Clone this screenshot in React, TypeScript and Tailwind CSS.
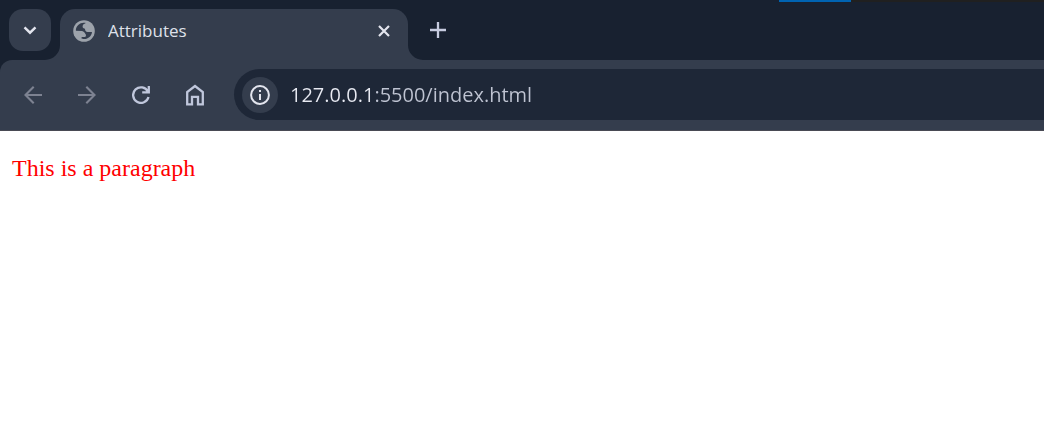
import { useState } from "react";
import type { ReactNode } from "react";

function IconButton({ label, className, children }: { label: string; className: string; children: ReactNode }) {
  return (
    <button type="button" aria-label={label} className={`flex shrink-0 items-center justify-center ${className}`}>
      {children}
    </button>
  );
}

function Globe() {
  return (
    <svg viewBox="0 0 24 24" className="size-6 shrink-0" aria-hidden="true">
      <circle cx="12" cy="12" r="10.8" fill="#9da3ab" />
      <path
        fill="#343d4d"
        d="M3.9 10.2 C4.6 6.8 7.6 4 11.6 3.8 C13 3.8 13.6 3.9 13.8 4.1 C12 4.9 10.6 5.8 10.6 7.5 C10.6 8.8 11.6 9.7 13 9.7 C13 11.7 13.8 12.9 15.6 12.9 L20 12.9 C19.6 16.8 16.4 19.9 12.2 20 C10.8 20 9.8 19.9 9.6 19.6 L9.6 18 L12.8 18 C14 18 14.2 16.6 13.8 15.6 C13 14 11.8 12.4 10 12 L3.9 11.8 Z"
      />
    </svg>
  );
}

function TabStrip() {
  return (
    <div className="relative flex h-[60px] items-end bg-[#182130] pl-[9px]">
      <div className="absolute top-0 right-0 flex h-0.5 w-[265px]">
        <div className="w-[72px] bg-[#0063b1]" />
        <div className="flex-1 bg-[#202020]" />
      </div>
      <IconButton label="Search tabs" className="mb-[9px] size-[42px] rounded-[14px] bg-[#343d4d] text-[#e3e5ee]">
        <svg viewBox="0 0 16 16" className="size-4" fill="none" stroke="currentColor" strokeWidth="2.4" aria-hidden="true">
          <path d="M2.5 5.3 8 10.7l5.5-5.4" />
        </svg>
      </IconButton>
      <div className="relative ml-[9px] flex h-[51px] w-[348px] items-center rounded-t-[15px] bg-[#343d4d] pr-3 pb-2 pl-3">
        <svg viewBox="0 0 15 15" className="absolute bottom-0 -left-[15px] size-[15px]" fill="#343d4d" aria-hidden="true">
          <path d="M15 0v15H0A15 15 0 0 0 15 0Z" />
        </svg>
        <svg viewBox="0 0 15 15" className="absolute -right-[15px] bottom-0 size-[15px]" fill="#343d4d" aria-hidden="true">
          <path d="M0 0v15h15A15 15 0 0 1 0 0Z" />
        </svg>
        <Globe />
        <span className="ml-3 flex-1 truncate text-[17px] leading-6 text-[#dfe1ea]">Attributes</span>
        <IconButton label="Close tab" className="size-6 text-[#e3e5ee]">
          <svg viewBox="0 0 12 12" className="size-3" fill="none" stroke="currentColor" strokeWidth="2.2" aria-hidden="true">
            <path d="m1 1 10 10M11 1 1 11" />
          </svg>
        </IconButton>
      </div>
      <IconButton label="New tab" className="mb-[9px] ml-[9px] size-[42px] text-[#c7cce0]">
        <svg viewBox="0 0 16 16" className="size-4" fill="none" stroke="currentColor" strokeWidth="2.3" aria-hidden="true">
          <path d="M8 0v16M0 8h16" />
        </svg>
      </IconButton>
    </div>
  );
}

function Toolbar() {
  const [url, setUrl] = useState("127.0.0.1:5500/index.html");
  return (
    <div className="bg-[#182130]">
      <div className="flex h-[71px] items-start rounded-tl-xl border-b border-[#494a54] bg-[#343d4d] pt-[9px] pl-3">
        <div className="flex gap-3 text-[#c0c7dc]">
          <IconButton label="Back" className="h-[52px] w-[42px] text-[#7d8291]">
            <svg viewBox="0 0 18 18" className="size-[18px]" fill="none" stroke="currentColor" strokeWidth="2.1" aria-hidden="true">
              <path d="M18 9H1.5M9.7.8 1.5 9l8.2 8.2" />
            </svg>
          </IconButton>
          <IconButton label="Forward" className="h-[52px] w-[42px] text-[#7d8291]">
            <svg viewBox="0 0 18 18" className="size-[18px]" fill="none" stroke="currentColor" strokeWidth="2.1" aria-hidden="true">
              <path d="M0 9h16.5M8.3.8 16.5 9l-8.2 8.2" />
            </svg>
          </IconButton>
          <IconButton label="Reload" className="h-[52px] w-[42px]">
            <svg viewBox="0 0 18 18" className="size-[18px]" fill="none" stroke="currentColor" strokeWidth="2.3" aria-hidden="true">
              <path d="M16.8 0v6.4h-6.6M15.9 5.6A7.8 7.8 0 1 0 16.5 11" />
            </svg>
          </IconButton>
          <IconButton label="Home" className="h-[52px] w-[42px]">
            <svg viewBox="0 0 18 22" className="h-[22px] w-[18px]" fill="none" stroke="currentColor" strokeWidth="2.3" aria-hidden="true">
              <path d="M1.2 20.4V8L9 2l7.8 6v12.4h-4.8v-7.6H6v7.6Z" />
            </svg>
          </IconButton>
        </div>
        <div className="ml-[18px] flex h-[51px] flex-1 items-start rounded-l-full bg-[#1e2737] pt-2 pl-2">
          <IconButton label="View site information" className="size-9 rounded-full bg-[#343d4d] text-[#e3e5ee]">
            <svg viewBox="0 0 20 20" className="size-5" fill="none" stroke="currentColor" strokeWidth="2" aria-hidden="true">
              <circle cx="10" cy="10" r="8.9" />
              <path d="M10 9v6M10 5v2" />
            </svg>
          </IconButton>
          <input
            type="text"
            aria-label="Address"
            value={url}
            onChange={(event) => setUrl(event.target.value)}
            className="ml-3 h-[34px] min-w-0 flex-1 bg-[linear-gradient(to_right,#e8eaf2_84px,#bfc4d2_84px)] bg-clip-text text-xl text-transparent caret-white outline-none"
          />
        </div>
      </div>
    </div>
  );
}

export default function App() {
  return (
    <div className="min-h-screen bg-white font-['Open_Sans','Noto_Sans',sans-serif]">
      <header>
        <TabStrip />
        <Toolbar />
      </header>
      <main className="p-3">
        <p className="mt-3 font-['Liberation_Serif',serif] text-2xl leading-[26px] text-[#ff0000]">This is a paragraph</p>
      </main>
    </div>
  );
}
